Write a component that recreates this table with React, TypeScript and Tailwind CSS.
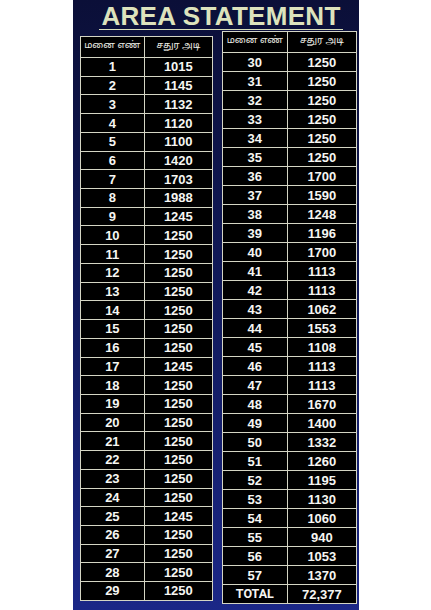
const left: [string, string][] = [
  ['1', '1015'], ['2', '1145'], ['3', '1132'], ['4', '1120'], ['5', '1100'],
  ['6', '1420'], ['7', '1703'], ['8', '1988'], ['9', '1245'], ['10', '1250'],
  ['11', '1250'], ['12', '1250'], ['13', '1250'], ['14', '1250'], ['15', '1250'],
  ['16', '1250'], ['17', '1245'], ['18', '1250'], ['19', '1250'], ['20', '1250'],
  ['21', '1250'], ['22', '1250'], ['23', '1250'], ['24', '1250'], ['25', '1245'],
  ['26', '1250'], ['27', '1250'], ['28', '1250'], ['29', '1250'],
];

const right: [string, string][] = [
  ['30', '1250'], ['31', '1250'], ['32', '1250'], ['33', '1250'], ['34', '1250'],
  ['35', '1250'], ['36', '1700'], ['37', '1590'], ['38', '1248'], ['39', '1196'],
  ['40', '1700'], ['41', '1113'], ['42', '1113'], ['43', '1062'], ['44', '1553'],
  ['45', '1108'], ['46', '1113'], ['47', '1113'], ['48', '1670'], ['49', '1400'],
  ['50', '1332'], ['51', '1260'], ['52', '1195'], ['53', '1130'], ['54', '1060'],
  ['55', '940'], ['56', '1053'], ['57', '1370'], ['TOTAL', '72,377'],
];

function AreaTable({ rows, className }: { rows: [string, string][]; className: string }) {
  return (
    <div className={`flex min-h-0 flex-col border-[1.5px] border-[#d4d5c4] bg-black ${className}`}>
      <div className="flex h-[21px] shrink-0 border-b-[1.5px] border-[#d4d5c4] text-[9.5px] leading-none text-[#ecece4]">
        <div className="flex flex-1 items-center justify-center border-r-[1.5px] border-[#d4d5c4] font-['Noto_Sans_Tamil','Noto_Sans','Lato',sans-serif]">
          மனை எண்
        </div>
        <div className="flex flex-[1.04] items-center justify-center font-['Noto_Sans_Tamil','Noto_Sans','Lato',sans-serif]">
          சதுர அடி
        </div>
      </div>
      {rows.map(([plot, area], i) => (
        <div
          key={plot}
          className={`flex min-h-0 flex-1 text-[13px] leading-none font-bold text-[#f6f6f2] ${
            i < rows.length - 1 ? 'border-b-[1.5px] border-[#d4d5c4]' : ''
          }`}
        >
          <div
            className={`flex flex-1 items-center justify-center border-r-[1.5px] border-[#d4d5c4] ${
              plot === 'TOTAL'
                ? "font-['Liberation_Sans_Narrow','Roboto',sans-serif] text-[12.5px]"
                : ''
            }`}
          >
            {plot}
          </div>
          <div className="flex flex-[1.04] items-center justify-center">{area}</div>
        </div>
      ))}
    </div>
  );
}

export default function App() {
  return (
    <div className="flex h-[610px] w-[431px] justify-center bg-white font-['Liberation_Sans',Arial,sans-serif]">
      <div className="flex h-full w-[286px] flex-col bg-gradient-to-b from-[#0b0f38] via-[#111a5c] to-[#1b2787]">
        <div className="flex shrink-0 justify-center pt-[3px] pl-[11px]">
          <h1 className="border-b-[1.5px] border-[#d9dfba] px-[2px] text-[26px] leading-[26px] font-bold tracking-[0.3px] text-[#dde3bd]">
            AREA STATEMENT
          </h1>
        </div>
        <div className="flex min-h-0 flex-1 gap-[9px] pl-[7px] pr-[2px]">
          <AreaTable rows={left} className="mt-[6px] mb-[9px] w-[133px]" />
          <AreaTable rows={right} className="mt-[1px] mb-[6px] w-[135px]" />
        </div>
      </div>
    </div>
  );
}
